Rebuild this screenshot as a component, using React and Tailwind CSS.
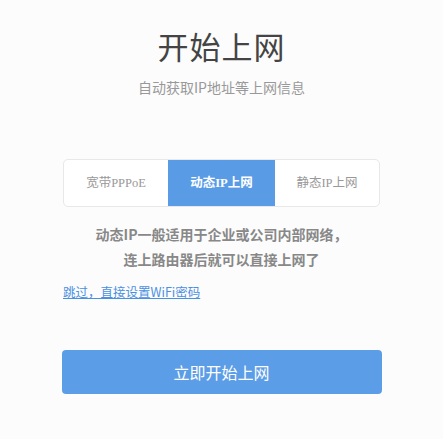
export default function App() {
  const sans = { fontFamily: '"Noto Sans CJK SC", "Noto Sans", sans-serif' };
  return (
    <div className="w-[443px] h-[439px] bg-[#fcfcfc] flex flex-col items-center" style={sans}>
      <h1 className="mt-[25px] text-[31px] leading-[42px] text-[#444] tracking-[1px]">开始上网</h1>
      <p className="mt-[10px] text-[14px] leading-[20px] text-[#999]">自动获取IP地址等上网信息</p>
      <div className="mt-[62px] w-[317px] h-[48px] flex border border-[#e8e8e8] rounded-[5px] bg-white overflow-hidden text-[12.5px]" style={{ fontFamily: '"Liberation Serif", "Noto Sans CJK SC", serif' }}>
        <div className="flex-1 flex items-center justify-center text-[#999]">宽带PPPoE</div>
        <div className="w-[107px] flex items-center justify-center bg-[#5a9be5] text-white font-bold">动态IP上网</div>
        <div className="flex-1 flex items-center justify-center text-[#999]">静态IP上网</div>
      </div>
      <div className="mt-[15px] text-[14px] leading-[25px] text-[#888] font-bold text-center">
        <div>动态IP一般适用于企业或公司内部网络，</div>
        <div>连上路由器后就可以直接上网了</div>
      </div>
      <div className="w-[317px] mt-[6px]">
        <a className="text-[12.5px] leading-[16px] text-[#4a90e2] underline">跳过，直接设置WiFi密码</a>
      </div>
      <button className="mt-[48px] w-[320px] h-[44px] rounded-[4px] bg-[#5b9de6] text-white text-[16px]">立即开始上网</button>
    </div>
  );
}
